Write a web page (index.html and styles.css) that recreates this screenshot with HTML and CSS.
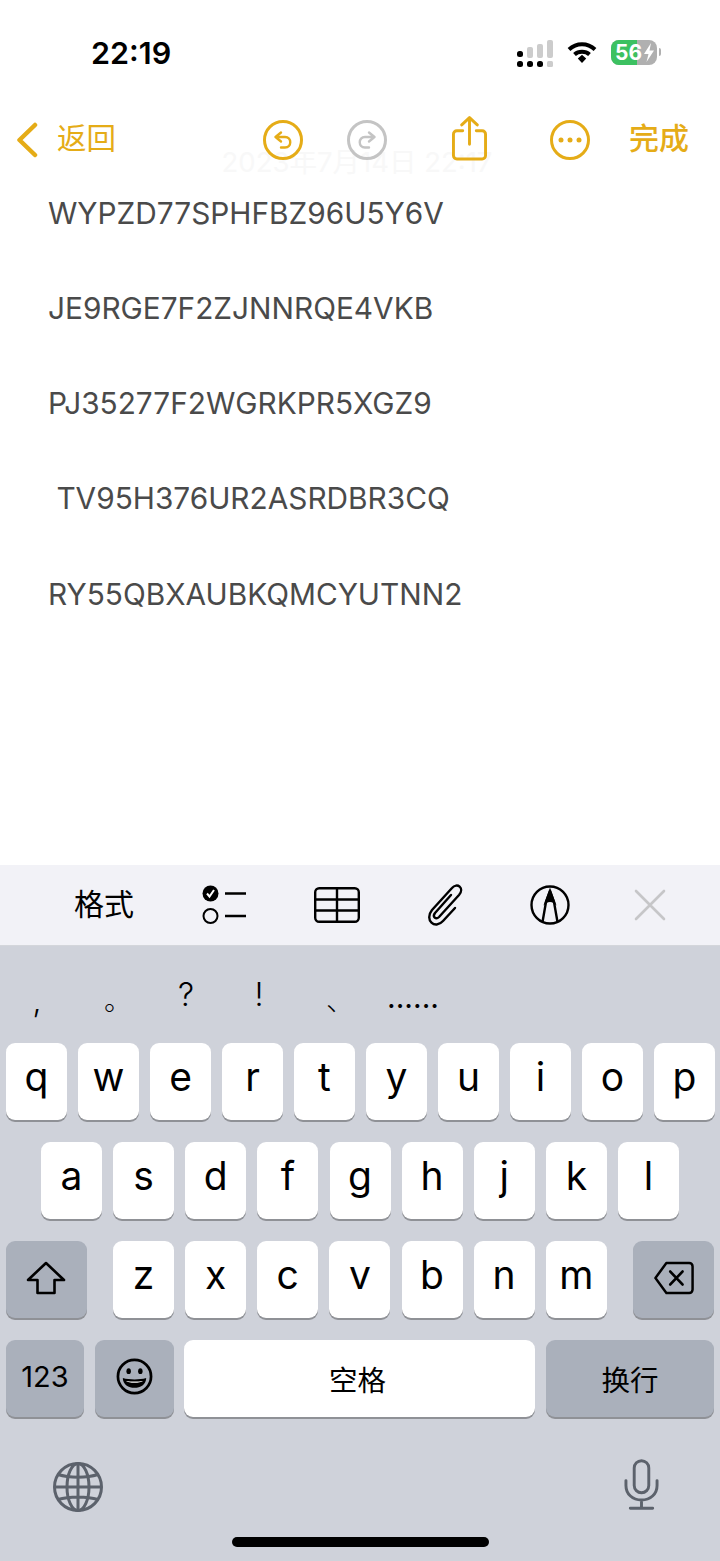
FILE: index.html
```html
<!DOCTYPE html>
<html lang="zh-CN">
<head>
    <meta charset="UTF-8">
    <meta name="viewport" content="width=device-width, initial-scale=1.0">
    <title>备忘录</title>
    <link rel="stylesheet" href="styles.css">
</head>
<body>
<div class="phone">
    <div class="status">
        <span class="time">22:19</span>
        <div class="status-icons">
            <svg class="signal" width="36" height="28" viewBox="0 0 36 28">
                <rect x="0" y="11" width="6" height="6" rx="2.5" fill="#000"/>
                <rect x="0" y="21" width="6" height="6" rx="2.5" fill="#000"/>
                <rect x="10" y="21" width="6" height="6" rx="2.5" fill="#000"/>
                <rect x="20" y="21" width="6" height="6" rx="2.5" fill="#000"/>
                <rect x="30" y="21" width="6" height="6" rx="1.5" fill="#ccc"/>
                <rect x="10" y="7" width="6" height="11" rx="2" fill="#ccc"/>
                <rect x="20" y="4" width="6" height="14" rx="2" fill="#ccc"/>
                <rect x="30" y="0" width="6" height="18" rx="2" fill="#ccc"/>
            </svg>
            <svg class="wifi" width="30" height="23" viewBox="0 0 30 23">
                <path d="M2 8.500C9.500 1.500 20.500 1.500 28 8.500" fill="none" stroke="#000" stroke-width="4"/>
                <path d="M7.500 13.500C11.500 9.800 18.500 9.800 22.500 13.500" fill="none" stroke="#000" stroke-width="4"/>
                <path d="M10.800 17.500L15 13.700L19.200 17.500L15 22Z" fill="#000"/>
            </svg>
            <div class="battery">
                <div class="battery-fill"></div>
                <span class="battery-num">56</span>
                <svg class="bolt" width="12" height="19" viewBox="0 0 12 19"><path d="M8 0L1 11H5.500L3.500 19L11 7.500H6.500Z" fill="#fff"/></svg>
            </div>
            <div class="battery-nub"></div>
        </div>
    </div>

    <div class="note-area">
        <p class="date">2023年7月14日 22:17</p>
        <nav class="nav">
            <div class="back">
                <svg width="22" height="36" viewBox="0 0 22 36"><path d="M19 3L3.500 18L19 33" fill="none" stroke="#e5ac17" stroke-width="4.500" stroke-linecap="round" stroke-linejoin="round"/></svg>
                <span class="back-text">返回</span>
            </div>
            <div class="nav-cell">
                <svg width="40" height="40" viewBox="0 0 40 40" fill="none" stroke="#e5ac17" stroke-width="3">
                    <circle cx="20" cy="20" r="18.500"/>
                    <path d="M18 12.500L12.500 17L18 21.500M12.500 17H22C29 17 29 27.500 22 27.500H18" stroke-width="2.400" stroke-linecap="round" stroke-linejoin="round"/>
                </svg>
            </div>
            <div class="nav-cell">
                <svg width="40" height="40" viewBox="0 0 40 40" fill="none" stroke="#c4c4c4" stroke-width="3">
                    <circle cx="20" cy="20" r="18.500"/>
                    <path d="M22 12.500L27.500 17L22 21.500M27.500 17H18C11 17 11 27.500 18 27.500H22" stroke-width="2.400" stroke-linecap="round" stroke-linejoin="round"/>
                </svg>
            </div>
            <div class="nav-cell">
                <svg class="share" width="35" height="45" viewBox="0 0 36 46" fill="none" stroke="#e5ac17" stroke-width="3" stroke-linecap="round" stroke-linejoin="round">
                    <path d="M11 15H5C3 15 1.500 16.500 1.500 18.500V40.500C1.500 42.500 3 44 5 44H31C33 44 34.500 42.500 34.500 40.500V18.500C34.500 16.500 33 15 31 15H25"/>
                    <path d="M18 29V2M10 9L18 1.500L26 9"/>
                </svg>
            </div>
            <div class="nav-cell">
                <svg width="40" height="40" viewBox="0 0 40 40">
                    <circle cx="20" cy="20" r="18.500" fill="none" stroke="#e5ac17" stroke-width="3"/>
                    <circle cx="11" cy="20" r="2.500" fill="#e5ac17"/>
                    <circle cx="20" cy="20" r="2.500" fill="#e5ac17"/>
                    <circle cx="29" cy="20" r="2.500" fill="#e5ac17"/>
                </svg>
            </div>
            <div class="nav-cell done">完成</div>
        </nav>
        <div class="note">
            <p>WYPZD77SPHFBZ96U5Y6V</p>
            <p>JE9RGE7F2ZJNNRQE4VKB</p>
            <p>PJ35277F2WGRKPR5XGZ9</p>
            <p>&nbsp;TV95H376UR2ASRDBR3CQ</p>
            <p>RY55QBXAUBKQMCYUTNN2</p>
        </div>
    </div>

    <div class="toolbar">
        <div class="tool tool-text">格式</div>
        <div class="tool">
            <svg width="46" height="40" viewBox="0 0 46 40">
                <circle cx="9.500" cy="8.500" r="8" fill="#000"/>
                <path d="M6 8.500L8.500 11.500L13 5" fill="none" stroke="#fff" stroke-width="2"/>
                <circle cx="9.500" cy="31" r="7" fill="none" stroke="#000" stroke-width="2"/>
                <path d="M24 8.500H45M24 31H45" stroke="#000" stroke-width="2.600"/>
            </svg>
        </div>
        <div class="tool">
            <svg width="46" height="36" viewBox="0 0 46 36" fill="none" stroke="#000" stroke-width="2.400">
                <rect x="1.200" y="1.200" width="43.600" height="33.600" rx="4"/>
                <path d="M1 12.500H45M1 23.500H45M23 1.500V35"/>
            </svg>
        </div>
        <div class="tool">
            <svg width="38" height="42" viewBox="0 0 38 42" fill="none" stroke="#000" stroke-width="2.400" stroke-linecap="round" stroke-linejoin="round">
                <path d="M24 11L8 29C5 33 9 36 12 33L32 11C38 4 30 -2 25 4L5 26C-3 36 8 46 16 37L28 24"/>
            </svg>
        </div>
        <div class="tool">
            <svg width="40" height="40" viewBox="0 0 40 40" fill="none" stroke="#000" stroke-width="2.400">
                <circle cx="20" cy="20" r="18.500"/>
                <path d="M12.500 37L16 17L20 6L24 17L27.500 37" stroke-linejoin="round"/>
                <path d="M16 17L20 6L24 17C22 15.500 18 15.500 16 17Z" fill="#000"/>
            </svg>
        </div>
        <div class="tool">
            <svg width="32" height="32" viewBox="0 0 32 32"><path d="M2 2L30 30M30 2L2 30" stroke="#c6c6c8" stroke-width="2.600" stroke-linecap="round"/></svg>
        </div>
    </div>

    <div class="keyboard">
        <div class="candidates">
            <span class="cand cand-comma">,</span>
            <span class="cand cand-stop">。</span>
            <span class="cand">?</span>
            <span class="cand">!</span>
            <span class="cand cand-stop">、</span>
            <span class="cand cand-dots">......</span>
        </div>
        <div class="row">
            <div class="key">q</div><div class="key">w</div><div class="key">e</div><div class="key">r</div><div class="key">t</div>
            <div class="key">y</div><div class="key">u</div><div class="key">i</div><div class="key">o</div><div class="key">p</div>
        </div>
        <div class="row row-mid">
            <div class="key">a</div><div class="key">s</div><div class="key">d</div><div class="key">f</div><div class="key">g</div>
            <div class="key">h</div><div class="key">j</div><div class="key">k</div><div class="key">l</div>
        </div>
        <div class="row row-shift">
            <div class="key key-grey key-side key-shift">
                <svg width="40" height="34" viewBox="0 0 40 34"><path d="M20 2L38 19H28.500V32H11.500V19H2Z" fill="none" stroke="#000" stroke-width="2.600" stroke-linejoin="round"/></svg>
            </div>
            <div class="letters">
                <div class="key">z</div><div class="key">x</div><div class="key">c</div><div class="key">v</div>
                <div class="key">b</div><div class="key">n</div><div class="key">m</div>
            </div>
            <div class="key key-grey key-side key-delete">
                <svg width="40" height="34" viewBox="0 0 42 34" preserveAspectRatio="none" fill="none" stroke="#000" stroke-width="2.600" stroke-linejoin="round">
                    <path d="M13 2H37C39 2 40.500 3.500 40.500 5.500V28.500C40.500 30.500 39 32 37 32H13L1.500 17Z"/>
                    <path d="M17 10.500L30 23.500M30 10.500L17 23.500" stroke-linecap="round"/>
                </svg>
            </div>
        </div>
        <div class="row row-bottom">
            <div class="key key-grey key-123">123</div>
            <div class="key key-grey key-emoji">
                <svg width="37" height="37" viewBox="0 0 38 38">
                    <circle cx="19" cy="19" r="17" fill="none" stroke="#000" stroke-width="2.800"/>
                    <ellipse cx="13" cy="13.500" rx="2.300" ry="3" fill="#000"/>
                    <ellipse cx="25" cy="13.500" rx="2.300" ry="3" fill="#000"/>
                    <path d="M7 20.500C14 22.500 24 22.500 31 20.500C31 34 7 34 7 20.500Z" fill="#000"/>
                    <path d="M10.500 23.500C16 24.500 22 24.500 27.500 23.500C26 26 12 26 10.500 23.500Z" fill="#fff"/>
                </svg>
            </div>
            <div class="key key-space">空格</div>
            <div class="key key-grey key-return">换行</div>
        </div>
        <div class="kb-bottom">
            <svg class="globe" width="50" height="50" viewBox="0 0 50 50" fill="none" stroke="#5c626c" stroke-width="3">
                <circle cx="25" cy="25" r="23.500"/>
                <ellipse cx="25" cy="25" rx="11" ry="23.500"/>
                <path d="M25 1.500V48.500M1.500 25H48.500M5 12.500C16 16 34 16 45 12.500M5 37.500C16 34 34 34 45 37.500"/>
            </svg>
            <svg width="35" height="51" viewBox="0 0 36 52" fill="none" stroke="#5c626c" stroke-width="3" stroke-linecap="round">
                <rect x="10.500" y="1.500" width="15" height="33" rx="7.500"/>
                <path d="M2 22V27C2 36 9 42 18 42C27 42 34 36 34 27V22M18 42V50M6.500 50.500H29.500"/>
            </svg>
        </div>
        <div class="home-bar"></div>
    </div>
</div>
</body>
</html>
```

FILE: styles.css
```css
* {
    box-sizing: border-box;
}

body {
    margin: 0;
    background-color: #fff;
    font-family: 'Inter', 'Noto Sans CJK SC', sans-serif;
    color: #000;
}

p {
    margin: 0;
}

.phone {
    width: 720px;
    height: 1561px;
    display: flex;
    flex-direction: column;
    overflow: hidden;
}

/* status bar */
.status {
    height: 106px;
    display: flex;
    justify-content: space-between;
    align-items: flex-start;
    padding: 34px 59px 0 91px;
}

.time {
    font-size: 30.500px;
    line-height: 38px;
    font-weight: 600;
}

.status-icons {
    display: flex;
    align-items: flex-start;
    margin-top: 6px;
}

.signal {
    margin-right: 14px;
    margin-left: -1px;
}

.wifi {
    margin-top: 1px;
    margin-right: 14px;
}

.battery {
    position: relative;
    width: 46px;
    height: 25px;
    border-radius: 8px;
    background-color: #b0b0b0;
    overflow: hidden;
    display: flex;
    align-items: center;
}

.battery-fill {
    position: absolute;
    left: 0;
    top: 0;
    bottom: 0;
    width: 56%;
    background-color: #3cc161;
}

.battery-num {
    position: relative;
    margin-left: 4px;
    font-size: 21px;
    font-weight: 700;
    line-height: 25px;
    color: #fff;
}

.bolt {
    position: relative;
    margin-left: 1px;
}

.battery-nub {
    width: 2px;
    height: 8px;
    margin-top: 8px;
    margin-left: 2px;
    border-radius: 0 2px 2px 0;
    background-color: #b0b0b0;
}

/* note */
.note-area {
    position: relative;
    height: 759px;
}

.date {
    position: absolute;
    top: 38px;
    left: 0;
    width: 714px;
    text-align: center;
    font-size: 27.500px;
    line-height: 36px;
    color: #f8f8f8;
}

.nav {
    position: relative;
    height: 46px;
    display: grid;
    grid-template-columns: 241px 84px 84px 120px 82px 96px;
    align-items: center;
    margin-top: 10px;
}

.back {
    display: flex;
    align-items: center;
    padding-left: 16px;
    gap: 19px;
    color: #e5ac17;
    font-size: 29.500px;
    line-height: 30px;
}

.back-text {
    padding-bottom: 3px;
}

.nav-cell {
    display: flex;
    justify-content: center;
    align-items: center;
}

.share {
    margin-bottom: 2px;
}

.done {
    color: #e5ac17;
    font-size: 30px;
    line-height: 30px;
    font-weight: 500;
    padding-bottom: 3px;
}

.note {
    display: flex;
    flex-direction: column;
    gap: 57.300px;
    padding: 31.500px 0 0 48px;
    font-size: 29.800px;
    line-height: 38px;
    color: #4a4a4a;
}

/* toolbar above keyboard */
.toolbar {
    height: 81px;
    display: grid;
    grid-template-columns: 120px 120px 106px 112px 96px 104px;
    padding-left: 44px;
    align-items: center;
    background-color: #f2f2f7;
    border-bottom: 1px solid #d4d6db;
}

.tool {
    display: flex;
    justify-content: center;
    align-items: center;
}

.tool-text {
    font-size: 30px;
    padding-bottom: 7px;
}

/* keyboard */
.keyboard {
    position: relative;
    flex: 1;
    background-color: #cfd2da;
    padding: 0 5px 0 6px;
}

.candidates {
    height: 97px;
    display: flex;
    align-items: center;
    padding-left: 24px;
    font-family: 'Inter', sans-serif;
    font-size: 32px;
    font-weight: 300;
}

.cand {
    width: 14px;
    margin-right: 60px;
    text-align: center;
}

.cand-comma {
    margin-top: 12px;
}

.cand-stop {
    font-family: 'Noto Sans CJK SC', sans-serif;
    font-size: 28px;
    margin-top: 8px;
}

.cand-dots {
    width: 52px;
    margin-left: -13px;
    margin-right: 0;
    font-size: 30px;
    font-weight: 400;
    white-space: nowrap;
    margin-top: 4px;
}

.cand + .cand-dots {
    position: relative;
}

.row {
    height: 77px;
    margin-bottom: 22px;
    display: flex;
    gap: 11px;
}

.row-mid {
    padding-left: 35px;
    gap: 11.125px;
}

.row-shift {
    gap: 26px;
}

.key-delete {
    margin-left: auto;
    margin-right: 1px;
}

.letters {
    display: flex;
    gap: 11.125px;
}

.key {
    width: 61px;
    height: 77px;
    display: flex;
    align-items: center;
    justify-content: center;
    background-color: #fff;
    border-radius: 9px;
    box-shadow: 0 2px 0 #8f9196;
    font-size: 39px;
    padding-bottom: 10px;
}

.key-grey {
    background-color: #aab0bb;
}

.key-side {
    width: 81px;
    padding-bottom: 4px;
}

.key-shift {
    padding-right: 2px;
}

.key-123 {
    width: 78px;
    font-size: 29px;
    padding-bottom: 4px;
}

.key-emoji {
    width: 79px;
    padding-bottom: 4px;
}

.key-space {
    width: 351px;
    margin-left: -1px;
    font-size: 28.500px;
    padding: 0 4px 0 0;
}

.key-return {
    width: 168px;
    font-size: 28.500px;
    padding-bottom: 0;
}

.kb-bottom {
    display: flex;
    justify-content: space-between;
    align-items: flex-start;
    margin-top: 42px;
    padding: 0 56px 0 47px;
}

.globe {
    margin-top: 3px;
}

.home-bar {
    position: absolute;
    left: 232px;
    top: 591px;
    width: 257px;
    height: 10px;
    border-radius: 5px;
    background-color: #000;
}
```
